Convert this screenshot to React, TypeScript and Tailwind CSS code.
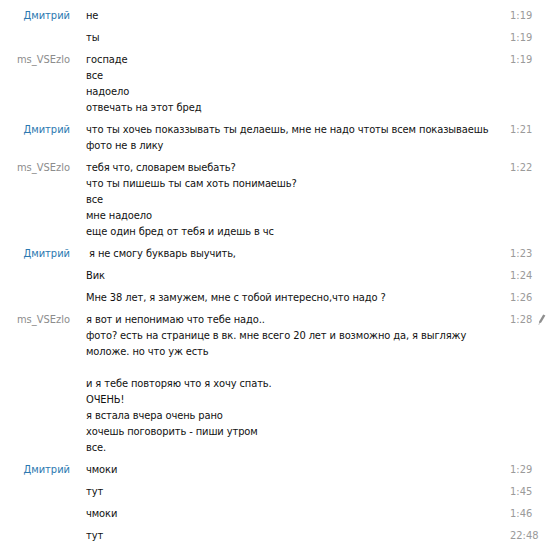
type Msg = {
  name?: string;
  self?: boolean;
  lines: string[];
  time: string;
  edited?: boolean;
};

const messages: Msg[] = [
  { name: "Дмитрий", self: true, lines: ["не"], time: "1:19" },
  { lines: ["ты"], time: "1:19" },
  {
    name: "ms_VSEzlo",
    lines: ["госпаде", "все", "надоело", "отвечать на этот бред"],
    time: "1:19",
  },
  {
    name: "Дмитрий",
    self: true,
    lines: [
      "что ты хочеь показзывать ты делаешь, мне не надо чтоты всем показываешь",
      "фото не в лику",
    ],
    time: "1:21",
  },
  {
    name: "ms_VSEzlo",
    lines: [
      "тебя что, словарем выебать?",
      "что ты пишешь ты сам хоть понимаешь?",
      "все",
      "мне надоело",
      "еще один бред от тебя и идешь в чс",
    ],
    time: "1:22",
  },
  { name: "Дмитрий", self: true, lines: [" я не смогу букварь выучить,"], time: "1:23" },
  { lines: ["Вик"], time: "1:24" },
  { lines: ["Мне 38 лет, я замужем, мне с тобой интересно,что надо ?"], time: "1:26" },
  {
    name: "ms_VSEzlo",
    lines: [
      "я вот и непонимаю что тебе надо..",
      "фото? есть на странице в вк. мне всего 20 лет и возможно да, я выгляжу",
      "моложе. но что уж есть",
      "",
      "и я тебе повторяю что я хочу спать.",
      "ОЧЕНЬ!",
      "я встала вчера очень рано",
      "хочешь поговорить - пиши утром",
      "все.",
    ],
    time: "1:28",
    edited: true,
  },
  { name: "Дмитрий", self: true, lines: ["чмоки"], time: "1:29" },
  { lines: ["тут"], time: "1:45" },
  { lines: ["чмоки"], time: "1:46" },
  { lines: ["тут"], time: "22:48" },
];

// small grey pencil shown next to the time of an edited message
function Pencil() {
  return (
    <svg width="8" height="11" viewBox="0 0 8 11" className="mt-[2px]">
      <path d="M5.2 0.6 L7.4 1.6 L3.2 8.6 L1.2 9.6 L1.1 7.6 Z" fill="#8f8f8f" />
      <path d="M1.2 9.6 L0.9 10.6" stroke="#8f8f8f" strokeWidth="0.8" />
    </svg>
  );
}

export default function App() {
  return (
    <div
      className="w-[559px] h-[550px] overflow-hidden bg-white pt-[5px] text-[11px] leading-[16px] text-[#111]"
      style={{ fontFamily: '"DejaVu Sans Condensed", "DejaVu Sans", sans-serif' }}
    >
      {messages.map((m, i) => (
        <div key={i} className="flex py-[3px]">
          <div
            className={
              "w-[70px] shrink-0 text-right " +
              (m.self ? "text-[#2b78b0]" : "text-[#8c8c8c]")
            }
          >
            {m.name ?? ""}
          </div>
          <div className="ml-[16px] w-[424px] shrink-0 tracking-[-0.1px]">
            {m.lines.map((l, j) => (
              <div key={j} className="h-[16px] whitespace-pre">
                {l}
              </div>
            ))}
          </div>
          <div className="flex gap-[6px] text-[#9a9a9a]">
            <span>{m.time}</span>
            {m.edited && <Pencil />}
          </div>
        </div>
      ))}
    </div>
  );
}
